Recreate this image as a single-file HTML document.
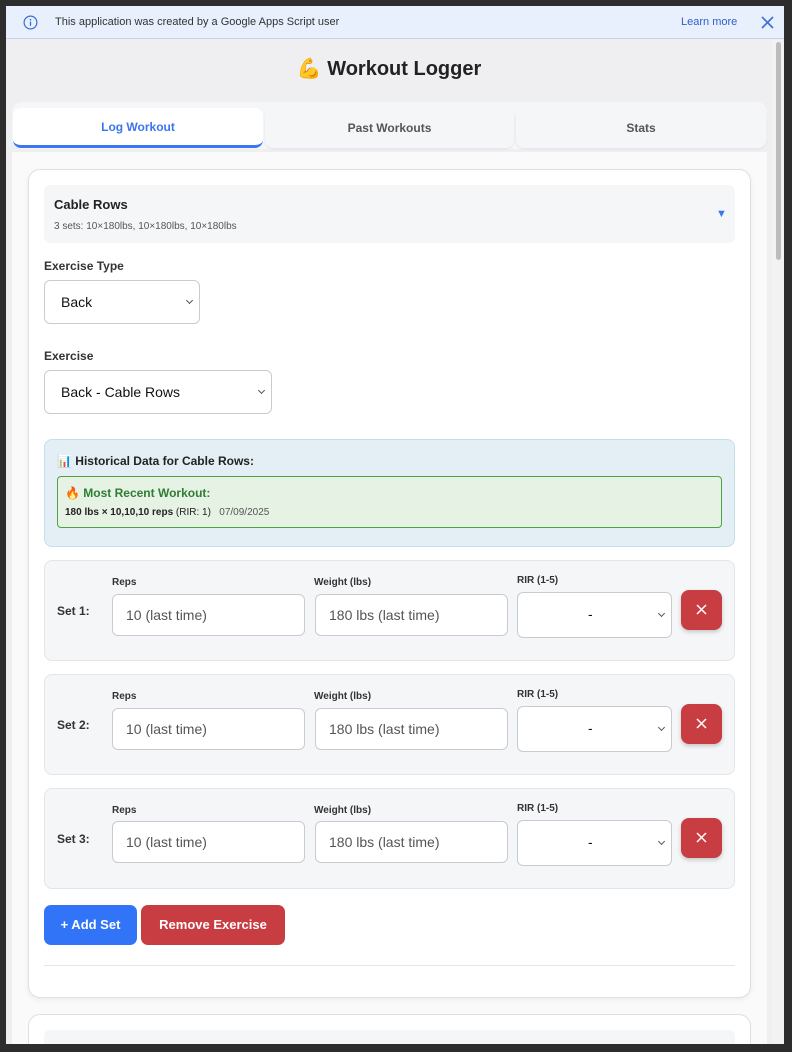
<!DOCTYPE html>
<html><head><meta charset="utf-8"><style>
*{box-sizing:border-box;margin:0;padding:0}
html{width:792px;height:1052px;overflow:hidden}
body{width:792px;height:1052px;background:#2d2d2d;font-family:"Liberation Sans",sans-serif;position:relative;overflow:hidden;color:#222}
.a{position:absolute}
#win{left:6px;top:6px;width:778px;height:1038px;background:#efeff2;overflow:hidden}
#ban{left:0;top:0;width:778px;height:33px;background:#e8effd;border-bottom:1px solid #c9d3e6;font-size:11px;color:#333}
.lbl{font-size:11px;font-weight:bold;color:#333}
.sel{background:#fff;border:1px solid #c8ccd2;border-radius:6px;font-size:14px;color:#111}
.sel .ch{position:absolute;right:7px;top:50%;margin-top:-4px;width:5px;height:5px;border-right:1px solid #555;border-bottom:1px solid #555;transform:rotate(45deg)}
.set{left:44px;width:691px;height:101px;background:#f5f6f8;border:1px solid #e2e5ea;border-radius:8px}
.inp{background:#fff;border:1px solid #c8ccd2;border-radius:6px;font-size:14px;color:#555;padding-left:13px;line-height:40px;height:42px}
.x{width:41px;height:40px;background:#c83d42;border-radius:8px;box-shadow:0 2px 4px rgba(0,0,0,.2)}
</style></head><body>
<div id="win" class="a">
 <div id="ban" class="a">
  <svg class="a" style="left:17px;top:9px" width="15" height="15" viewBox="0 0 16 16"><circle cx="8" cy="8" r="6.8" fill="none" stroke="#3b6fd6" stroke-width="1.3"/><rect x="7.3" y="7" width="1.4" height="4.5" fill="#3b6fd6"/><circle cx="8" cy="5" r=".9" fill="#3b6fd6"/></svg>
  <div class="a" style="left:49px;top:10px">This application was created by a Google Apps Script user</div>
  <div class="a" style="left:675px;top:10px;color:#2f5fd0">Learn more</div>
  <svg class="a" style="left:755px;top:10px" width="13" height="13" viewBox="0 0 13 13"><path d="M1 1L12 12M12 1L1 12" stroke="#3b6fd6" stroke-width="1.6"/></svg>
 </div>
 <div class="a" style="left:0;top:50px;width:766px;text-align:center;font-size:20px;font-weight:bold;color:#222">💪 Workout Logger</div>
 <div class="a" style="left:6px;top:96px;width:755px;height:47px;background:#f5f6f8;border-radius:10px"></div>
 <div class="a" style="left:7px;top:102px;width:250px;height:40px;background:#fff;border-radius:8px;border-bottom:3px solid #3a76f0;text-align:center;line-height:38px;font-size:12px;font-weight:bold;color:#3a76f0">Log Workout</div>
 <div class="a" style="left:259px;top:102px;width:249px;height:40px;background:#f5f6f8;border-radius:8px;box-shadow:0 1px 2px rgba(0,0,0,.08);text-align:center;line-height:40px;font-size:12px;font-weight:bold;color:#555">Past Workouts</div>
 <div class="a" style="left:510px;top:102px;width:250px;height:40px;background:#f5f6f8;border-radius:8px;box-shadow:0 1px 2px rgba(0,0,0,.08);text-align:center;line-height:40px;font-size:12px;font-weight:bold;color:#555">Stats</div>
 <div class="a" style="left:6px;top:146px;width:755px;height:900px;background:#fafafa"></div>
 <div class="a" style="left:766px;top:34px;width:12px;height:1004px;background:#f2f2f2"></div>
 <div class="a" style="left:770px;top:36px;width:5px;height:218px;background:#bdbdbd;border-radius:3px"></div>
</div>
<div class="a" style="left:28px;top:169px;width:723px;height:829px;background:#fff;border:1px solid #dde0e5;border-radius:12px;box-shadow:0 2px 6px rgba(0,0,0,.06)"></div>
<div class="a" style="left:44px;top:185px;width:691px;height:58px;background:#f5f6f8;border-radius:6px"></div>
<div class="a" style="left:54px;top:197px;font-size:13px;font-weight:bold">Cable Rows</div>
<div class="a" style="left:54px;top:221px;font-size:10px;color:#555">3 sets: 10×180lbs, 10×180lbs, 10×180lbs</div>
<div class="a" style="left:716px;top:208px;font-size:11px;color:#3a76f0">▼</div>
<div class="a lbl" style="left:44px;top:259px;font-size:12px">Exercise Type</div>
<div class="a sel" style="left:44px;top:280px;width:156px;height:44px"><span class="a" style="left:16px;top:13px">Back</span><span class="ch"></span></div>
<div class="a lbl" style="left:44px;top:349px;font-size:12px">Exercise</div>
<div class="a sel" style="left:44px;top:370px;width:228px;height:44px"><span class="a" style="left:16px;top:13px">Back - Cable Rows</span><span class="ch"></span></div>
<div class="a" style="left:44px;top:439px;width:691px;height:108px;background:#e3eff5;border:1px solid #c3dfe9;border-radius:8px"></div>
<div class="a" style="left:57px;top:454px;font-size:12px;font-weight:bold">📊 Historical Data for Cable Rows:</div>
<div class="a" style="left:57px;top:476px;width:665px;height:52px;background:#e6f2e4;border:1px solid #4ea244;border-radius:4px"></div>
<div class="a" style="left:65px;top:486px;font-size:12px;font-weight:bold;color:#2e7d32">🔥 Most Recent Workout:</div>
<div class="a" style="left:65px;top:507px;font-size:10px;color:#222"><b>180 lbs × 10,10,10 reps</b> (RIR: 1) &nbsp; <span style="color:#555">07/09/2025</span></div>

<div class="a set" style="top:560px"></div>
<div class="a set" style="top:674px"></div>
<div class="a set" style="top:788px"></div>

<div class="a lbl" style="left:57px;top:604px;font-size:12px">Set 1:</div>
<div class="a lbl" style="left:112px;top:577px;font-size:10px">Reps</div>
<div class="a lbl" style="left:314px;top:577px;font-size:10px">Weight (lbs)</div>
<div class="a lbl" style="left:517px;top:575px;font-size:10px">RIR (1-5)</div>
<div class="a inp" style="left:112px;top:594px;width:193px">10 (last time)</div>
<div class="a inp" style="left:315px;top:594px;width:193px">180 lbs (last time)</div>
<div class="a sel" style="left:517px;top:592px;width:155px;height:46px"><span class="a" style="left:70px;top:13px">-</span><span class="ch"></span></div>
<div class="a x" style="left:681px;top:590px"><svg class="a" style="left:15px;top:14px" width="11" height="11"><path d="M1 1L10 10M10 1L1 10" stroke="#fff" stroke-width="1.5"/></svg></div>

<div class="a lbl" style="left:57px;top:718px;font-size:12px">Set 2:</div>
<div class="a lbl" style="left:112px;top:691px;font-size:10px">Reps</div>
<div class="a lbl" style="left:314px;top:691px;font-size:10px">Weight (lbs)</div>
<div class="a lbl" style="left:517px;top:689px;font-size:10px">RIR (1-5)</div>
<div class="a inp" style="left:112px;top:708px;width:193px">10 (last time)</div>
<div class="a inp" style="left:315px;top:708px;width:193px">180 lbs (last time)</div>
<div class="a sel" style="left:517px;top:706px;width:155px;height:46px"><span class="a" style="left:70px;top:13px">-</span><span class="ch"></span></div>
<div class="a x" style="left:681px;top:704px"><svg class="a" style="left:15px;top:14px" width="11" height="11"><path d="M1 1L10 10M10 1L1 10" stroke="#fff" stroke-width="1.5"/></svg></div>

<div class="a lbl" style="left:57px;top:832px;font-size:12px">Set 3:</div>
<div class="a lbl" style="left:112px;top:805px;font-size:10px">Reps</div>
<div class="a lbl" style="left:314px;top:805px;font-size:10px">Weight (lbs)</div>
<div class="a lbl" style="left:517px;top:803px;font-size:10px">RIR (1-5)</div>
<div class="a inp" style="left:112px;top:821px;width:193px">10 (last time)</div>
<div class="a inp" style="left:315px;top:821px;width:193px">180 lbs (last time)</div>
<div class="a sel" style="left:517px;top:820px;width:155px;height:46px"><span class="a" style="left:70px;top:13px">-</span><span class="ch"></span></div>
<div class="a x" style="left:681px;top:818px"><svg class="a" style="left:15px;top:14px" width="11" height="11"><path d="M1 1L10 10M10 1L1 10" stroke="#fff" stroke-width="1.5"/></svg></div>

<div class="a" style="left:44px;top:905px;width:93px;height:40px;background:#3174f8;border-radius:7px;color:#fff;font-size:13px;font-weight:bold;text-align:center;line-height:40px">+ Add Set</div>
<div class="a" style="left:141px;top:905px;width:144px;height:40px;background:#c83d42;border-radius:7px;color:#fff;font-size:13px;font-weight:bold;text-align:center;line-height:40px">Remove Exercise</div>
<div class="a" style="left:44px;top:965px;width:691px;height:1px;background:#e2e5ea"></div>
<div class="a" style="left:28px;top:1014px;width:723px;height:30px;background:#fff;border:1px solid #dde0e5;border-bottom:none;border-radius:12px 12px 0 0"></div>
<div class="a" style="left:44px;top:1030px;width:691px;height:14px;background:#f5f6f8;border-radius:6px 6px 0 0"></div>
<div class="a" style="left:0;top:1044px;width:792px;height:8px;background:#2d2d2d"></div>
</body></html>
